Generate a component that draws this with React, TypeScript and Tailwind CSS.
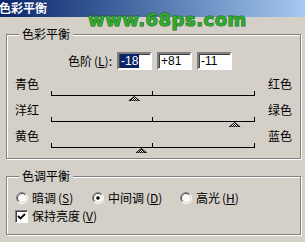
import React from 'react'

const levels = [-18, 81, -11]

const rows = [
  { left: '青色', right: '红色', value: -18 },
  { left: '洋红', right: '绿色', value: 81 },
  { left: '黄色', right: '蓝色', value: -11 },
]

function Track({ value }: { value: number }) {
  const c = 101.5 + (value / 100) * 101.5
  return (
    <svg width="204" height="26" className="block shrink-0">
      <defs>
        <pattern id="dither" width="2" height="2" patternUnits="userSpaceOnUse">
          <rect width="2" height="2" fill="#fff" />
          <rect width="1" height="1" fill="#000" />
          <rect x="1" y="1" width="1" height="1" fill="#000" />
        </pattern>
      </defs>
      <line x1="0" y1="20.5" x2="204" y2="20.5" stroke="#000" />
      <line x1="0.5" y1="16" x2="0.5" y2="21" stroke="#000" />
      <line x1="101.5" y1="16" x2="101.5" y2="21" stroke="#000" />
      <line x1="203.5" y1="16" x2="203.5" y2="21" stroke="#000" />
      <polygon points={`${c},21.5 ${c + 5.5},26 ${c - 5.5},26`} fill="url(#dither)" stroke="#000" strokeWidth="1" />
    </svg>
  )
}

function Radio({ checked }: { checked?: boolean }) {
  return (
    <svg width="12" height="12" viewBox="0 0 12 12" className="shrink-0">
      <defs>
        <linearGradient id="rOut" x1="0" y1="0" x2="1" y2="1">
          <stop offset="0.45" stopColor="#808080" />
          <stop offset="0.55" stopColor="#ffffff" />
        </linearGradient>
        <linearGradient id="rIn" x1="0" y1="0" x2="1" y2="1">
          <stop offset="0.45" stopColor="#404040" />
          <stop offset="0.55" stopColor="#d4d0c8" />
        </linearGradient>
      </defs>
      <circle cx="6" cy="6" r="5.5" fill="#fff" stroke="url(#rOut)" />
      <circle cx="6" cy="6" r="4.5" fill="none" stroke="url(#rIn)" />
      {checked && <circle cx="6" cy="6" r="1.8" fill="#000" />}
    </svg>
  )
}

function Key({ k }: { k: string }) {
  return (
    <span className="ml-[2px]">(<span className="underline underline-offset-[1px]">{k}</span>)</span>
  )
}

function Group({ title, children }: { title: string; children: React.ReactNode }) {
  return (
    <div className="relative ml-[6px] w-[295px] border border-[#808080] shadow-[inset_1px_1px_0_#fff,1px_1px_0_#fff]">
      <span className="absolute left-[12px] top-[-8px] bg-[#d4d0c8] px-[3px] leading-[14px]">{title}</span>
      {children}
    </div>
  )
}

export default function App() {
  return (
    <div className="relative h-[242px] w-[305px] overflow-hidden bg-[#d4d0c8] text-[12px] text-black font-['Noto_Sans_CJK_SC','Noto_Sans_CJK_JP',sans-serif]">
      <div className="h-[17px] bg-gradient-to-r from-[#0a246a] to-[#a6caf0]">
        <span className="ml-[-1px] block pt-[1px] text-[12px] font-bold leading-[14px] text-white">色彩平衡</span>
      </div>

      <div className="mt-[17px]">
        <Group title="色彩平衡">
          <div className="flex h-[18px] items-center pl-[61px] mt-[17px]">
            <span className="leading-[14px]">色阶<Key k="L" />:</span>
            <div className="ml-[5px] flex gap-[5px]">
              {levels.map((v, i) => (
                <div key={i} className="flex h-[18px] w-[35px] items-center border-2 border-t-[#808080] border-l-[#808080] border-b-white border-r-white bg-white pl-[1px] shadow-[inset_1px_1px_0_#404040] font-['Liberation_Sans',sans-serif] text-[12px] leading-[14px]">
                  <span className={i === 0 ? 'bg-[#0a246a] px-[1px] text-white' : 'px-[1px]'}>{v > 0 ? `+${v}` : v}</span>
                </div>
              ))}
            </div>
          </div>
          <div className="mt-[5px] pb-[5px] pl-[8px]">
            {rows.map((r) => (
              <div key={r.left} className="flex h-[26px]">
                <span className="mt-[2px] w-[36px] leading-[14px]">{r.left}</span>
                <Track value={r.value} />
                <span className="ml-[13px] mt-[2px] leading-[14px]">{r.right}</span>
              </div>
            ))}
          </div>
        </Group>
      </div>

      <div className="mt-[17px]">
        <Group title="色调平衡">
          <div className="flex h-[14px] items-center pl-[9px] mt-[14px]">
            <div className="flex w-[76px] items-center gap-[4px]">
              <Radio />
              <span className="leading-[14px]">暗调<Key k="S" /></span>
            </div>
            <div className="flex w-[88px] items-center gap-[4px]">
              <Radio checked />
              <span className="leading-[14px]">中间调<Key k="D" /></span>
            </div>
            <div className="flex items-center gap-[4px]">
              <Radio />
              <span className="leading-[14px]">高光<Key k="H" /></span>
            </div>
          </div>
          <div className="mt-[4px] mb-[11px] flex h-[14px] items-center gap-[4px] pl-[8px]">
            <div className="flex h-[13px] w-[13px] items-center justify-center border border-t-[#808080] border-l-[#808080] border-b-white border-r-white bg-white shadow-[inset_1px_1px_0_#404040]">
              <svg width="9" height="9" viewBox="0 0 9 9">
                <path d="M1 4 L3.5 6.5 L8 2" fill="none" stroke="#000" strokeWidth="1.8" />
              </svg>
            </div>
            <span className="leading-[14px]">保持亮度<Key k="V" /></span>
          </div>
        </Group>
      </div>

      <div className="absolute left-[88px] top-[11px] font-['DejaVu_Sans',sans-serif] text-[18px] font-bold leading-[18px] tracking-[0.5px] text-[#32a832] [-webkit-text-stroke:1px_#0d6a0d] [paint-order:stroke_fill]">
        www.68ps.com
      </div>
    </div>
  )
}
